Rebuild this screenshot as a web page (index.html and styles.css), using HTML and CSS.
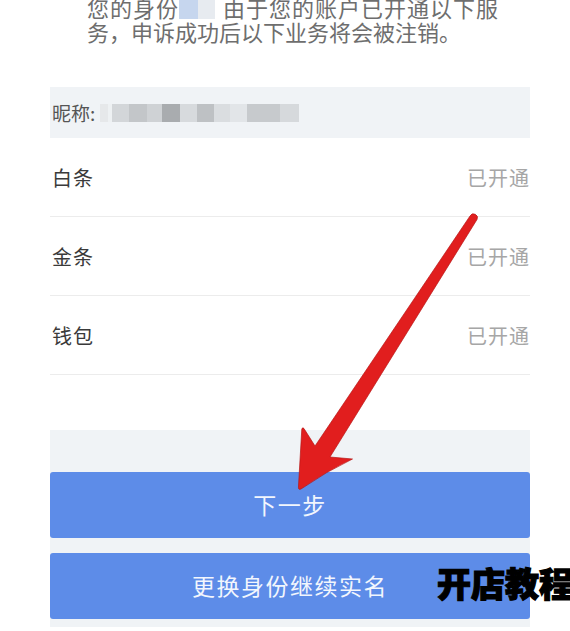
FILE: index.html
```html
<!DOCTYPE html>
<html lang="zh-CN">
<head>
<meta charset="utf-8">
<title>申诉</title>
<link rel="stylesheet" href="styles.css">
</head>
<body>
<div class="page">
  <p class="notice">您的身份<span class="mask"></span>由于您的账户已开通以下服务，申诉成功后以下业务将会被注销。</p>
  <div class="panel">
    <div class="nick"><span class="nick-label">昵称:</span><span class="nick-mask"></span></div>
    <ul class="services">
      <li class="service"><span class="name">白条</span><span class="state">已开通</span></li>
      <li class="service"><span class="name">金条</span><span class="state">已开通</span></li>
      <li class="service"><span class="name">钱包</span><span class="state">已开通</span></li>
    </ul>
    <div class="actions">
      <button class="btn" type="button">下一步</button>
      <button class="btn" type="button">更换身份继续实名</button>
    </div>
  </div>
  <svg class="arrow" viewBox="0 0 570 631" width="570" height="631" aria-hidden="true">
    <path d="M470 216 A3.7 3.7 0 0 1 477 219.5 L330 457 L352.5 459 Q327 471 301 489 Q298 490.5 298.5 486 L301.8 429 Q302.6 426.8 304 428.6 L315 446 Z" fill="#e11e1e" stroke="#b81515" stroke-width="0.7" stroke-linejoin="round"/>
  </svg>
  <div class="watermark">开店教程</div>
</div>
</body>
</html>
```
FILE: styles.css
```css
html, body {
  margin: 0;
  padding: 0;
  background: #ffffff;
}

body {
  font-family: "Noto Sans CJK SC", "Noto Sans", sans-serif;
}

.page {
  position: relative;
  width: 570px;
  height: 631px;
  overflow: hidden;
}

.notice {
  margin: -5px 0 0 87px;
  width: 411px;
  font-size: 22px;
  line-height: 24px;
  color: #6e6e6e;
  text-align: justify;
}

.mask {
  display: inline-block;
  width: 43px;
  height: 21px;
  vertical-align: -2px;
  background: linear-gradient(to right,
    #c6d6ee 0 19px,
    #e7ebf0 19px 36px,
    transparent 36px);
}

.panel {
  margin: 44px 0 0 50px;
  width: 480px;
}

.nick {
  height: 51px;
  background: #f0f3f6;
  display: flex;
  align-items: center;
  padding-left: 2px;
}

.nick-label {
  font-size: 19px;
  color: #555555;
}

.nick-mask {
  margin-left: 5px;
  width: 199px;
  height: 18px;
  background: linear-gradient(to right,
    #e6e8ea 0 8px,
    #eef1f3 8px 12px,
    #d3d6d9 12px 29px,
    #c3c6c9 29px 47px,
    #cfd2d5 47px 62px,
    #a9acaf 62px 80px,
    #d7dadd 80px 97px,
    #bec1c4 97px 114px,
    #dadde0 114px 130px,
    #e2e5e8 130px 147px,
    #c7cacd 147px 180px,
    #d6d9dc 180px 199px);
}

.services {
  list-style: none;
  margin: 0;
  padding: 0;
}

.service {
  height: 78px;
  border-bottom: 1px solid #ececec;
  display: flex;
  align-items: center;
  justify-content: space-between;
  padding: 0 1px 0 2px;
}

.name {
  font-size: 20px;
  color: #3a3a3a;
  letter-spacing: 1px;
}

.state {
  font-size: 20px;
  color: #a6a6a6;
  letter-spacing: 1px;
  margin-right: -1px;
}

.actions {
  margin-top: 55px;
  background: #f0f3f6;
  padding: 42px 0 8px;
  display: flex;
  flex-direction: column;
  gap: 15px;
}

.btn {
  height: 66px;
  border: none;
  border-radius: 3px;
  background: #5d8ce8;
  color: #f2f6fd;
  font-family: inherit;
  font-size: 23px;
  letter-spacing: 1.5px;
  padding: 0 0 3px;
}

.arrow {
  position: absolute;
  left: 0;
  top: 0;
  pointer-events: none;
}

.watermark {
  position: absolute;
  left: 437px;
  top: 566px;
  font-size: 34px;
  line-height: 34px;
  font-weight: 900;
  color: #000000;
  -webkit-text-stroke: 1.2px #000000;
  white-space: nowrap;
}
```
